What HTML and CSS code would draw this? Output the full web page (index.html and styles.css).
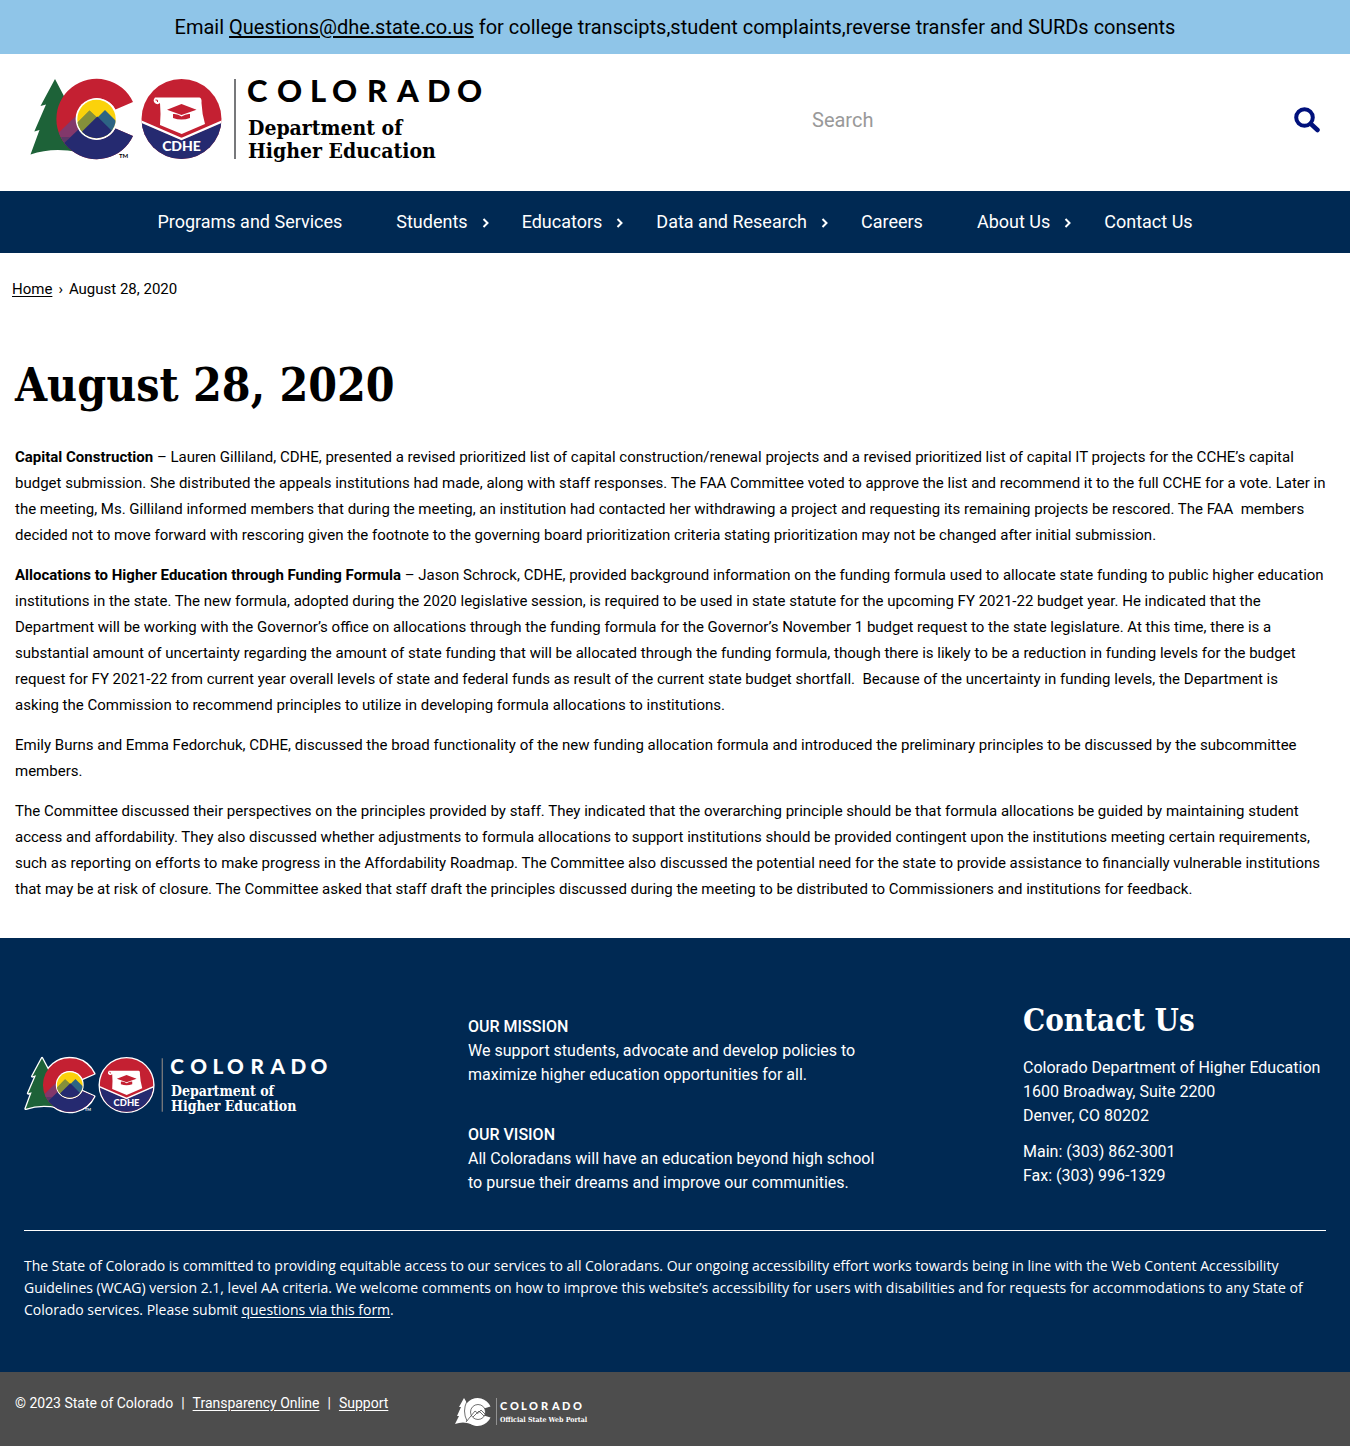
FILE: index.html
```html
<!DOCTYPE html>
<html lang="en">
<head>
<meta charset="utf-8">
<meta name="viewport" content="width=device-width, initial-scale=1">
<title>August 28, 2020 | Colorado Department of Higher Education</title>
<link rel="stylesheet" href="styles.css">
</head>
<body>
<svg class="defs" width="0" height="0" aria-hidden="true">
  <defs>
    <clipPath id="c-shape"><path d="M133 102 A40.2 40.2 0 1 0 133 136 L115.500 128.500 A20.700 20.700 0 1 1 115.500 109.500 Z"/></clipPath>
    <clipPath id="c-core"><circle cx="96.500" cy="119" r="19.200"/></clipPath>
    <clipPath id="seal"><circle cx="181.500" cy="119" r="40"/></clipPath>
    <symbol id="dhe-logo" viewBox="28 76 458 92">
      <g class="outline">
        <path d="M55 79 L40.500 106 L46 104.500 L34.300 131.500 L39.500 130 L30.500 154.500 Q52 147 78 152 L84 100 L66 100 Z"/>
        <path d="M133 102 A40.2 40.2 0 1 0 133 136 L115.500 128.500 A20.700 20.700 0 1 1 115.500 109.500 Z"/>
        <circle cx="181.500" cy="119" r="40"/>
      </g>
      <path fill="#1d6238" d="M55 79 L40.500 106 L46 104.500 L34.300 131.500 L39.500 130 L30.500 154.500 Q52 147 78 152 L84 100 L66 100 Z"/>
      <g clip-path="url(#c-shape)">
        <rect x="56" y="78" width="80" height="82" fill="#c42032"/>
        <path d="M50 141 L80 112 V130 L60 152 Z" fill="#82386b"/>
        <path d="M50 147 L62 137 L70 137 L58 152 Z" fill="#5c3867"/>
        <path d="M58 149 L80 128 L100 120 H136 V162 H58 Z" fill="#252a70"/>
      </g>
      <circle cx="96.500" cy="119" r="20.900" fill="#fff"/>
      <g clip-path="url(#c-core)">
        <rect x="76" y="98" width="42" height="42" fill="#fbd20b"/>
        <path d="M89.500 110.500 L115 136 H64 Z" fill="#85903a"/>
        <path d="M105 110 L130 135 H80 Z" fill="#2d6484"/>
        <path d="M89.500 110.500 L97.300 117.500 L80 135 L72 128 Z" fill="#85903a"/>
        <path d="M97.300 116.500 L122 141 H72.500 Z" fill="#252a70"/>
      </g>
      <text class="tm" x="119" y="158">TM</text>
      <g clip-path="url(#seal)">
        <rect x="141" y="78" width="81" height="82" fill="#c42032"/>
        <path d="M140 122 L181.500 140 L223 122 V160 H140 Z" fill="#252a70"/>
        <path d="M140 121 L181.500 139 L223 121" fill="none" stroke="#fff" stroke-width="2.200"/>
      </g>
      <path fill="#fff" d="M155 97.500 H199.500 Q202 98 201.500 103 Q202 114 205 124 L181.700 134 L160 125 Q161 113 160 103 Q158 105 155.500 103.500 Q152 101 155 97.500 Z"/>
      <path d="M155.500 100 Q158.500 99.500 157.500 102" fill="none" stroke="#c42032"/>
      <path fill="#c42032" d="M167 109.800 L181.500 104 L196.500 109.800 L181.500 115 Z M173 114 Q178 113.500 181.500 116.500 Q186 113.500 190 114 V118 Q181.500 121 173 118 Z"/>
      <text class="seal-text" x="181.500" y="150.500" text-anchor="middle">CDHE</text>
      <rect class="rule" x="234" y="79" width="2" height="80"/>
      <text class="state" y="102" x="247 277 310 332 367 397 427 457">COLORADO</text>
      <text class="dept" x="248" y="135">Department of</text>
      <text class="dept" x="248" y="158">Higher Education</text>
    </symbol>
  </defs>
</svg>

<div class="alert">Email&nbsp;<a href="mailto:Questions@dhe.state.co.us">Questions@dhe.state.co.us</a> for college transcipts,student complaints,reverse transfer and SURDs consents</div>

<header class="header">
  <a class="brand" href="#" aria-label="Colorado Department of Higher Education"><svg class="logo" viewBox="0 0 458 92"><use href="#dhe-logo"/></svg></a>
  <form class="search" role="search">
    <input type="search" aria-label="Search" placeholder="Search">
    <button type="submit" aria-label="Submit search">
      <svg width="26" height="26" viewBox="0 0 26 26" fill="none" stroke="#00117c" stroke-linecap="round"><circle cx="10.500" cy="10.500" r="8.300" stroke-width="4"/><path d="M17 17 L23.500 23" stroke-width="4.500"/></svg>
    </button>
  </form>
</header>

<nav class="nav" aria-label="Main">
  <ul>
    <li><a href="#">Programs and Services</a></li>
    <li><a href="#">Students</a><button type="button" aria-label="Students menu"><svg width="7" height="10" viewBox="0 0 7 10"><path d="M1.500 1 L5.500 5 L1.500 9"/></svg></button></li>
    <li><a href="#">Educators</a><button type="button" aria-label="Educators menu"><svg width="7" height="10" viewBox="0 0 7 10"><path d="M1.500 1 L5.500 5 L1.500 9"/></svg></button></li>
    <li><a href="#">Data and Research</a><button type="button" aria-label="Data and Research menu"><svg width="7" height="10" viewBox="0 0 7 10"><path d="M1.500 1 L5.500 5 L1.500 9"/></svg></button></li>
    <li><a href="#">Careers</a></li>
    <li><a href="#">About Us</a><button type="button" aria-label="About Us menu"><svg width="7" height="10" viewBox="0 0 7 10"><path d="M1.500 1 L5.500 5 L1.500 9"/></svg></button></li>
    <li><a href="#">Contact Us</a></li>
  </ul>
</nav>

<nav class="breadcrumb" aria-label="Breadcrumb"><a href="#">Home</a><span>›</span><span>August 28, 2020</span></nav>

<main class="content">
  <h1>August 28, 2020</h1>
  <p><strong>Capital Construction</strong> – Lauren Gilliland, CDHE, presented a revised prioritized list of capital construction/renewal projects and a revised prioritized list of capital IT projects for the CCHE’s capital budget submission. She distributed the appeals institutions had made, along with staff responses. The FAA Committee voted to approve the list and recommend it to the full CCHE for a vote. Later in the meeting, Ms. Gilliland informed members that during the meeting, an institution had contacted her withdrawing a project and requesting its remaining projects be rescored. The FAA&nbsp; members decided not to move forward with rescoring given the footnote to the governing board prioritization criteria stating prioritization may not be changed after initial submission.</p>
  <p><strong>Allocations to Higher Education through Funding Formula</strong> – Jason Schrock, CDHE, provided background information on the funding formula used to allocate state funding to public higher education institutions in the state. The new formula, adopted during the 2020 legislative session, is required to be used in state statute for the upcoming FY 2021-22 budget year. He indicated that the Department will be working with the Governor’s office on allocations through the funding formula for the Governor’s November 1 budget request to the state legislature. At this time, there is a substantial amount of uncertainty regarding the amount of state funding that will be allocated through the funding formula, though there is likely to be a reduction in funding levels for the budget request for FY 2021-22 from current year overall levels of state and federal funds as result of the current state budget shortfall.&nbsp; Because of the uncertainty in funding levels, the Department is asking&nbsp;the Commission to recommend principles to utilize in developing formula allocations to institutions.</p>
  <p>Emily Burns and Emma Fedorchuk, CDHE, discussed the broad functionality of the new funding allocation formula and introduced the preliminary principles to be discussed by the subcommittee members.</p>
  <p>The Committee discussed their perspectives on the principles provided by staff. They indicated that the overarching principle should be that formula allocations be guided by maintaining student access and affordability. They also discussed whether adjustments to formula allocations to support institutions should be provided contingent upon the institutions meeting certain requirements, such as reporting on efforts to make progress in the Affordability Roadmap. The Committee also discussed the potential need for the state to provide assistance to financially vulnerable institutions that may be at risk of closure. The Committee asked that staff draft the principles discussed during the meeting to be distributed to Commissioners and institutions for feedback.</p>
</main>

<footer>
  <div class="footer-main">
    <div class="footer-columns">
      <div class="footer-brand"><svg class="logo logo-footer" viewBox="0 0 458 92" role="img" aria-label="Colorado Department of Higher Education"><use href="#dhe-logo"/></svg></div>
      <div class="statements">
        <p><strong>OUR MISSION</strong><br>We support students, advocate and develop policies to maximize higher education opportunities for all.</p>
        <p><strong>OUR VISION</strong><br>All Coloradans will have an education beyond high school to pursue their dreams and improve our communities.</p>
      </div>
      <div class="contact">
        <h2>Contact Us</h2>
        <p>Colorado Department of Higher Education<br>1600 Broadway, Suite 2200<br>Denver, CO 80202</p>
        <p>Main: (303) 862-3001<br>Fax: (303) 996-1329</p>
      </div>
    </div>
    <p class="accessibility">The State of Colorado is committed to providing equitable access to our services to all Coloradans. Our ongoing accessibility effort works towards being in line with the Web Content Accessibility Guidelines (WCAG) version 2.1, level AA criteria. We welcome comments on how to improve this website’s accessibility for users with disabilities and for requests for accommodations to any State of Colorado services. Please submit <a href="#">questions via this form</a>.</p>
  </div>
  <div class="footer-legal">
    <p><span>© 2023 State of Colorado</span><span>|</span><a href="#">Transparency Online</a><span>|</span><a href="#">Support</a></p>
    <a class="portal" href="#" aria-label="Colorado Official State Web Portal">
      <svg width="138" height="32" viewBox="0 0 138 32">
        <path fill="#fff" d="M9 1 L4 10 H6 L2 19 H4 L0 27 Q8 24 16 27 L20 6 H12 Z"/>
        <path fill="#fff" d="M35.500 9.500 A14 14 0 1 0 35.500 20.500 L29 18.500 V11.500 Z"/>
        <g fill="none" stroke="#4d4d4d" stroke-width="0.800"><circle cx="23" cy="15" r="7.500" fill="#fff"/><path d="M12 4 Q7 14 12 24 M11 25 L20 14 L23 16.500 L26 13 L30 17 M18 20 L24 14 L29 19"/></g>
        <rect x="41" y="1" width="1" height="27" fill="#929292"/>
        <text class="portal-state" y="13" x="45 55 66 74 86 97 107 118">COLORADO</text>
        <text class="portal-name" x="45" y="25">Official State Web Portal</text>
      </svg>
    </a>
  </div>
</footer>
</body>
</html>
```
FILE: styles.css
```css
* { box-sizing: border-box; }

body {
  margin: 0;
  background: #fff;
  color: #000;
  font: 15px/26px Roboto, "Liberation Sans", sans-serif;
}

p, h1, h2, ul { margin: 0; padding: 0; }
a { color: inherit; text-underline-offset: 2px; }
.defs { position: absolute; }

.alert {
  padding: 12px 24px;
  background: #8fc5e8;
  font-size: 20px;
  line-height: 30px;
  text-align: center;
}

.header {
  display: grid;
  grid-template-columns: 3fr 2fr;
  align-items: start;
  padding: 22px 30px 23px;
}

.logo { --logo-outline: none; display: block; width: 458px; height: 92px; color: #000; }
.brand { margin-left: -2px; }
.outline { fill: none; stroke: var(--logo-outline); stroke-width: 4px; stroke-linejoin: round; }
.rule { fill: #77787b; }
.tm { font: 700 6px Lato, sans-serif; fill: currentColor; }
.seal-text { font: 900 14px Lato, sans-serif; fill: #fff; }
.state { font: 900 31px Lato, sans-serif; fill: currentColor; }
.dept { font: 700 21px "DejaVu Serif Condensed", "DejaVu Serif", serif; fill: currentColor; }

.search { display: flex; align-items: center; height: 88px; padding-left: 8px; }
.search input {
  flex: 1;
  min-width: 0;
  padding: 0;
  border: 0;
  outline: 0;
  background: none;
  font: 20px/30px Roboto, "Liberation Sans", sans-serif;
}
.search input::placeholder { color: #999; }
.search button { display: flex; padding: 0; border: 0; background: none; }

.nav { background: #002953; color: #fff; }
.nav ul { display: flex; justify-content: center; list-style: none; }
.nav li { display: flex; margin-right: 54px; font-size: 18px; line-height: 62px; }
.nav li:has(button), .nav li:last-child { margin-right: 0; }
.nav a { text-decoration: none; white-space: nowrap; }
.nav button { width: 54px; padding: 2px 0 0 14px; border: 0; background: none; text-align: left; }
.nav path { fill: none; stroke: #fff; stroke-width: 2; }

.breadcrumb { display: flex; gap: 6px; padding: 23px 12px 0; }

.content { padding: 50px 15px 36px; }
h1, h2 { font-family: "DejaVu Serif Condensed", "DejaVu Serif", serif; font-weight: 700; }
h1 { margin-bottom: 26px; font-size: 46px; line-height: 66px; }
.content p + p { margin-top: 14px; }

.footer-main { padding: 61px 24px 51px; background: #002953; color: #fff; }
.footer-columns {
  display: grid;
  grid-template-columns: 4fr 5fr 303px;
  padding-bottom: 35px;
  border-bottom: 1px solid #fff;
  font-size: 16px;
  line-height: 24px;
}
.footer-brand { padding-top: 57px; }
.logo-footer { --logo-outline: #fff; width: 306px; height: 62px; color: #fff; }
.statements { max-width: 416px; padding-top: 16px; }
.statements p + p { margin-top: 36px; }
.statements strong { font-weight: 500; }
.contact h2 { margin-bottom: 15px; font-size: 31px; line-height: 42px; }
.contact p + p { margin-top: 12px; }
.accessibility { margin-top: 24px; font: 14px/22px "Open Sans", "Noto Sans", sans-serif; }

.footer-legal {
  display: flex;
  gap: 67px;
  padding: 20px 15px;
  background: #4d4d4d;
  color: #fff;
  font-size: 14px;
  line-height: 22px;
}
.footer-legal p { display: flex; gap: 8px; }
.portal { display: flex; padding-top: 5px; margin-bottom: -3px; }
.portal-state { font: 900 11px Lato, sans-serif; fill: #fff; }
.portal-name { font: 700 7px "DejaVu Serif Condensed", "DejaVu Serif", serif; fill: #fff; }
```
